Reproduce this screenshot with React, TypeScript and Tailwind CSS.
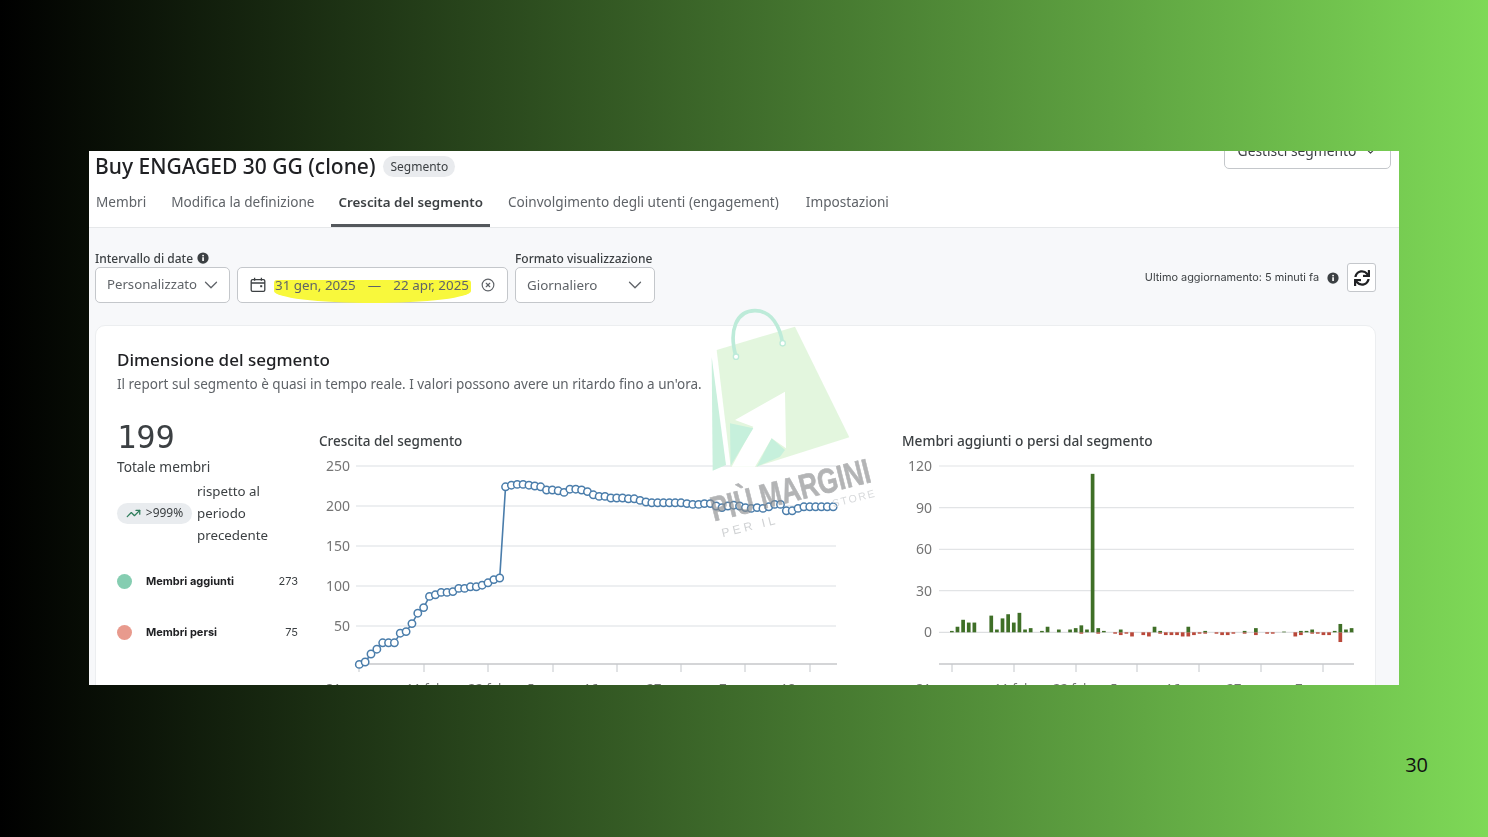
import { ChevronDown, CircleX, TrendingUp } from 'lucide-react';
import { FaSync } from 'react-icons/fa';

// one value per day, 31 gen -> 22 apr
const growth = [
  2, 5, 15, 21, 29, 29, 29, 41, 43, 53, 66, 73, 87, 89, 92, 92, 93, 97, 97, 99, 99, 101, 104, 108, 110,
  224, 226, 227, 227, 226, 225, 224, 220, 220, 219, 217, 221, 221,
  220, 218, 214, 212, 212, 210, 210, 210, 209, 209, 207, 205, 204, 204, 204, 204, 204, 204, 203, 202, 202,
  203, 203, 200, 198, 200, 201, 200, 198, 197, 198, 197, 199, 202, 202, 194, 194, 197, 199, 199, 199, 199, 199, 199,
];

const added = [
  1, 4, 9, 7, 7, 0, 0, 12, 2, 10, 13, 7, 14, 2, 3, 0, 1, 4, 0, 2, 0, 2, 3, 5, 2, 114, 3, 1, 0, 0, 2, 0, 0, 0, 0, 0,
  4, 1, 0, 0, 0, 0, 4, 0, 0, 1, 0, 0, 0, 0, 0, 0, 1, 0, 3, 0, 0, 0, 0, 0.5, 0, 0, 1, 1, 2, 0, 0, 0, 1, 6, 2, 3,
];
const lost = [
  0, 0, 0, 0, 0, 0, 0, 0, 0, 0, 0, 0, 0, 0, 0, 0, 0, 0, 0, 0, 0, 0, 0, 1, 0, 0, 1, 0, 0, 1, 2, 1, 3, 0, 2, 3,
  0, 1, 2, 2, 2, 3, 3, 2, 1, 1, 0, 1, 2, 2, 1, 0, 1, 0, 2, 0, 1, 1, 0, 0, 0, 3, 2, 0, 1, 1, 2, 2, 0, 7, 0, 0,
];

const px = (i: number) => 359.3 + 5.85 * i;
const py = (v: number) => 666 - v * 0.8;
const points = growth.map((v, i) => `${px(i)},${py(v)}`).join(' ');

const InfoDot = ({ className }: { className: string }) => (
  <svg className={className} viewBox="0 0 16 16">
    <circle cx="8" cy="8" r="7.5" fill="#3c4043" />
    <rect x="7" y="7" width="2.2" height="5" fill="#fff" />
    <rect x="7" y="3.8" width="2.2" height="2" fill="#fff" />
  </svg>
);

const CalendarIcon = () => (
  <svg className="w-[16px] h-[16px] text-[#3c4043]" viewBox="0 0 16 16" fill="none" stroke="currentColor" strokeWidth="1.3">
    <rect x="1.2" y="2.6" width="13.6" height="11.8" rx="1.4" />
    <path d="M1.2 6h13.6M4.6 0.8v3M11.4 0.8v3" />
    <rect x="10.2" y="8.2" width="2" height="2" fill="currentColor" stroke="none" />
  </svg>
);

const GrowthChart = () => (
  <svg width="530" height="245" viewBox="319 455 530 245" className="block mt-[4px]">
    {[466, 506, 546, 586, 626].map((y) => (
      <line key={y} x1="356" x2="836" y1={y} y2={y} stroke="#dcdfe3" strokeWidth="1.2" />
    ))}
    {[
      ['250', 466],
      ['200', 506],
      ['150', 546],
      ['100', 586],
      ['50', 626],
    ].map(([t, y]) => (
      <text key={t} x="350" y={Number(y) + 5} textAnchor="end" fontSize="14" fill="#757575" fontFamily="Noto Sans, sans-serif">
        {t}
      </text>
    ))}
    <line x1="356" x2="837" y1="664" y2="664" stroke="#a9acb0" strokeWidth="1.2" />
    {[359, 424, 488, 553, 617, 681, 745, 810].map((x) => (
      <line key={x} x1={x} x2={x} y1="664" y2="672" stroke="#c4c7cb" />
    ))}
    {[
      ['31 gen', 347],
      ['11 feb', 425],
      ['22 feb', 487],
      ['5 mar', 545],
      ['16 mar', 605],
      ['27 mar', 668],
      ['7 apr', 735],
      ['18 apr', 800],
    ].map(([t, x]) => (
      <text key={t} x={x} y="693" textAnchor="middle" fontSize="13" fill="#757575" fontFamily="Noto Sans, sans-serif">
        {t}
      </text>
    ))}
    <polyline points={points} fill="none" stroke="#4a7dab" strokeWidth="1.6" />
    {growth.map((v, i) => (
      <circle key={i} cx={px(i)} cy={py(v)} r="3.7" fill="#fff" stroke="#4a7dab" strokeWidth="1.5" />
    ))}
  </svg>
);

const MembersChart = () => (
  <svg width="470" height="245" viewBox="902 455 470 245" className="block mt-[4px]">
    {[466, 507.7, 549.3, 590.7].map((y) => (
      <line key={y} x1="939" x2="1354" y1={y} y2={y} stroke="#e2e4e6" strokeWidth="1.2" />
    ))}
    <line x1="939" x2="1354" y1="632.3" y2="632.3" stroke="#d5d7da" strokeWidth="1" />
    {[
      ['120', 466],
      ['90', 507.7],
      ['60', 549.3],
      ['30', 590.7],
      ['0', 632.3],
    ].map(([t, y]) => (
      <text key={t} x="932" y={Number(y) + 5} textAnchor="end" fontSize="14" fill="#757575" fontFamily="Noto Sans, sans-serif">
        {t}
      </text>
    ))}
    <line x1="939" x2="1354" y1="664" y2="664" stroke="#a9acb0" strokeWidth="1.2" />
    {[952, 1014, 1076, 1137, 1199, 1261, 1323].map((x) => (
      <line key={x} x1={x} x2={x} y1="664" y2="672" stroke="#c4c7cb" />
    ))}
    {[
      ['31 gen', 937],
      ['11 feb', 1013],
      ['22 feb', 1072],
      ['5 mar', 1128],
      ['16 mar', 1187],
      ['27 mar', 1248],
      ['7 apr', 1311],
    ].map(([t, x]) => (
      <text key={t} x={x} y="693" textAnchor="middle" fontSize="13" fill="#757575" fontFamily="Noto Sans, sans-serif">
        {t}
      </text>
    ))}
    {lost.map((v, i) =>
      v > 0 ? <rect key={i} x={950 + i * 5.63} y="632.3" width="3.7" height={v * 1.39} fill="#b9483a" /> : null,
    )}
    {added.map((v, i) =>
      v > 0 ? <rect key={i} x={950 + i * 5.63} y={632.3 - v * 1.39} width="3.7" height={v * 1.39} fill="#3f6f27" /> : null,
    )}
  </svg>
);

// logo sits on top of the screenshot, same as in the slide
const Watermark = () => (
  <svg
    width="190"
    height="250"
    viewBox="0 0 570 750"
    className="absolute left-[611px] top-[149px] pointer-events-none"
  >
    <polygon points="50,150 285,80 448,412 170,500 92,500" fill="#e2f5dc" opacity="0.95" />
    <polygon points="35,170 78,495 38,512" fill="#c9f0dd" />
    <polygon points="255,275 105,360 160,380 95,500 165,500 215,415 258,445" fill="#fff" />
    <polygon points="90,370 160,385 92,497" fill="#c6f0dc" />
    <polygon points="215,415 255,450 240,470 170,500" fill="#c6f0dc" />
    <path d="M108 170 C 85 90, 110 32, 165 32 C 215 32, 240 80, 248 130" fill="none" stroke="#bdebd9" strokeWidth="11" strokeLinecap="round" />
    <circle cx="108" cy="170" r="8" fill="#fff" stroke="#bdebd9" strokeWidth="4" />
    <circle cx="248" cy="130" r="8" fill="#fff" stroke="#bdebd9" strokeWidth="4" />
    <text
      x="42"
      y="664"
      transform="rotate(-14 42 664)"
      fontSize="104"
      fontWeight="700"
      fill="#8b8d8f"
      stroke="#8b8d8f"
      strokeWidth="2"
      opacity="0.65"
      fontFamily="Liberation Sans, sans-serif"
      textLength="490"
      lengthAdjust="spacingAndGlyphs"
    >
      PIÙ MARGINI
    </text>
    <text x="68" y="712" transform="rotate(-14 68 712)" fontSize="36" letterSpacing="10" fill="#cfd1d3" fontFamily="Liberation Sans, sans-serif">
      PER IL
    </text>
    <text x="400" y="622" transform="rotate(-14 400 622)" fontSize="32" letterSpacing="5" fill="#d8dadc" fontFamily="Liberation Sans, sans-serif">
      STORE
    </text>
  </svg>
);

const App = () => {
  const tabClass = (active: boolean) =>
    `h-full px-[7px] flex items-center pb-[2px] ${
      active
        ? 'text-[13.35px] font-semibold text-[#3c4043] border-b-[3px] border-[#54585c] pt-[3px]'
        : 'text-[13.6px] text-[#5f6368]'
    }`;

  return (
    <div className="w-[1488px] h-[837px] overflow-hidden bg-linear-to-r/srgb from-black to-[#7ed957] pt-[151px] font-['Noto_Sans',sans-serif]">
      {/* the source screenshot is soft, so the panel gets a very slight blur */}
      <div className="relative ml-[89px] w-[1310px] h-[534px] overflow-hidden bg-[#f7f8fa] blur-[0.3px]">
        {/* header */}
        <div className="bg-white border-b border-[#e6e8ea] h-[77px]">
          <div className="flex items-start h-[28px] pl-[6px] pr-[8px]">
            <span className="text-[21px] leading-[30px] font-medium text-[#202124]">Buy ENGAGED 30 GG (clone)</span>
            <span className="ml-[8px] mt-[5px] h-[21px] px-[7px] rounded-full bg-[#e9ebee] text-[12px] leading-[21px] text-[#3c4043]">
              Segmento
            </span>
            <button className="ml-auto -mt-[18px] w-[167px] h-[36px] border border-[#c4c7cb] rounded-[5px] flex items-center justify-center gap-[8px] text-[13.8px] text-[#3c4043]">
              Gestisci segmento
              <ChevronDown className="w-[13px] h-[13px]" />
            </button>
          </div>
          <div className="flex items-stretch h-[48px]">
            <div className={tabClass(false)}>Membri</div>
            <div className={`${tabClass(false)} ml-[11px]`}>Modifica la definizione</div>
            <div className={`${tabClass(true)} ml-[10px]`}>Crescita del segmento</div>
            <div className={`${tabClass(false)} ml-[11px]`}>Coinvolgimento degli utenti (engagement)</div>
            <div className={`${tabClass(false)} ml-[13px]`}>Impostazioni</div>
          </div>
        </div>

        {/* filters */}
        <div className="flex items-start pl-[6px] pt-[22px] h-[97px]">
          <div>
            <div className="flex items-center gap-[4px] h-[17px] text-[12px] font-medium text-[#3c4043]">
              Intervallo di date <InfoDot className="w-[12px] h-[12px] -mt-[1px]" />
            </div>
            <div className="flex gap-[7px]">
              <div className="w-[135px] h-[36px] bg-white border border-[#c4c7cb] rounded-[5px] flex items-center justify-between pl-[11px] pr-[7px] text-[13.2px] text-[#5f6368]">
                Personalizzato <ChevronDown className="w-[22px] h-[22px]" strokeWidth={1.4} />
              </div>
              <div className="w-[271px] h-[36px] bg-white border border-[#c4c7cb] rounded-[5px] flex items-center pl-[12px] text-[13.4px] text-[#5f6368]">
                <CalendarIcon />
                <span className="ml-[8px] w-[197px] h-[23px] mt-[13px] flex items-start justify-between leading-[11px] pl-[1px] pr-[2px] bg-[#f8f83c] rounded-t-[3px] rounded-b-[50%_12px]">
                  <span>31 gen, 2025</span>
                  <span>—</span>
                  <span>22 apr, 2025</span>
                </span>
                <CircleX className="ml-[10px] w-[14px] h-[14px]" />
              </div>
            </div>
          </div>
          <div className="ml-[7px]">
            <div className="h-[17px] flex items-center text-[12px] font-medium text-[#3c4043]">Formato visualizzazione</div>
            <div className="w-[140px] h-[36px] bg-white border border-[#c4c7cb] rounded-[5px] flex items-center justify-between pl-[11px] pr-[8px] text-[13.4px] text-[#5f6368]">
              Giornaliero <ChevronDown className="w-[22px] h-[22px]" strokeWidth={1.4} />
            </div>
          </div>
          <div className="ml-auto mr-[23px] mt-[13px] flex items-center font-['Inter',sans-serif]">
            <span className="text-[10.9px] text-[#3c4043]">Ultimo aggiornamento: 5 minuti fa</span>
            <InfoDot className="ml-[8px] w-[12px] h-[12px]" />
            <div className="ml-[8px] w-[29px] h-[29px] bg-white border border-[#c4c7cb] rounded-[3px] flex items-center justify-center">
              <FaSync className="w-[16px] h-[16px] text-[#202124]" />
            </div>
          </div>
        </div>

        {/* card */}
        <div className="ml-[6px] w-[1281px] h-[400px] bg-white border border-[#eceef0] rounded-[10px] pl-[21px] pt-[22px]">
          <div className="text-[17px] leading-[24px] font-medium text-[#202124]">Dimensione del segmento</div>
          <div className="mt-[1px] text-[13.5px] leading-[22px] text-[#5f6368]">
            Il report sul segmento è quasi in tempo reale. I valori possono avere un ritardo fino a un'ora.
          </div>
          <div className="flex mt-[22px]">
            <div className="w-[202px] shrink-0 pt-[1px]">
              <div className="font-['DejaVu_Sans_Mono',monospace] text-[32px] leading-[38px] text-[#3c4043]">199</div>
              <div className="text-[13.7px] leading-[22px] text-[#3c4043]">Totale membri</div>
              <div className="flex items-center mt-[2px] w-[181px]">
                <div className="w-[75px] h-[21px] rounded-full bg-[#e9ecef] flex items-center justify-center gap-[5px] text-[12px] text-[#3c4043]">
                  <TrendingUp className="w-[15px] h-[15px] text-[#2e7d5b]" />
                  &gt;999%
                </div>
                <div className="ml-[5px] w-[90px] text-[13.3px] leading-[22px] text-[#3c4043]">rispetto al periodo precedente</div>
              </div>
              <div className="flex items-center h-[20px] w-[181px] mt-[25px] font-['Inter',sans-serif] text-[11px] text-[#202124]">
                <span className="w-[15px] h-[15px] rounded-full bg-[#85cdb1]" />
                <span className="ml-[14px] font-bold">Membri aggiunti</span>
                <span className="ml-auto text-[#3c4043]">273</span>
              </div>
              <div className="flex items-center h-[20px] w-[181px] mt-[31px] font-['Inter',sans-serif] text-[11px] text-[#202124]">
                <span className="w-[15px] h-[15px] rounded-full bg-[#e89a8d]" />
                <span className="ml-[14px] font-bold">Membri persi</span>
                <span className="ml-auto text-[#3c4043]">75</span>
              </div>
            </div>
            <div className="w-[583px] shrink-0 pt-[14px]">
              <div className="text-[13.5px] leading-[20px] font-medium text-[#3c4043]">Crescita del segmento</div>
              <GrowthChart />
            </div>
            <div className="pt-[14px]">
              <div className="text-[13.7px] leading-[20px] font-medium text-[#3c4043]">Membri aggiunti o persi dal segmento</div>
              <MembersChart />
            </div>
          </div>
        </div>

        <Watermark />
      </div>
      <div className="flex justify-end pr-[60px] mt-[66px] text-[20px] leading-[27px] text-[#111] font-['Open_Sans',sans-serif]">
        30
      </div>
    </div>
  );
};

export default App;
